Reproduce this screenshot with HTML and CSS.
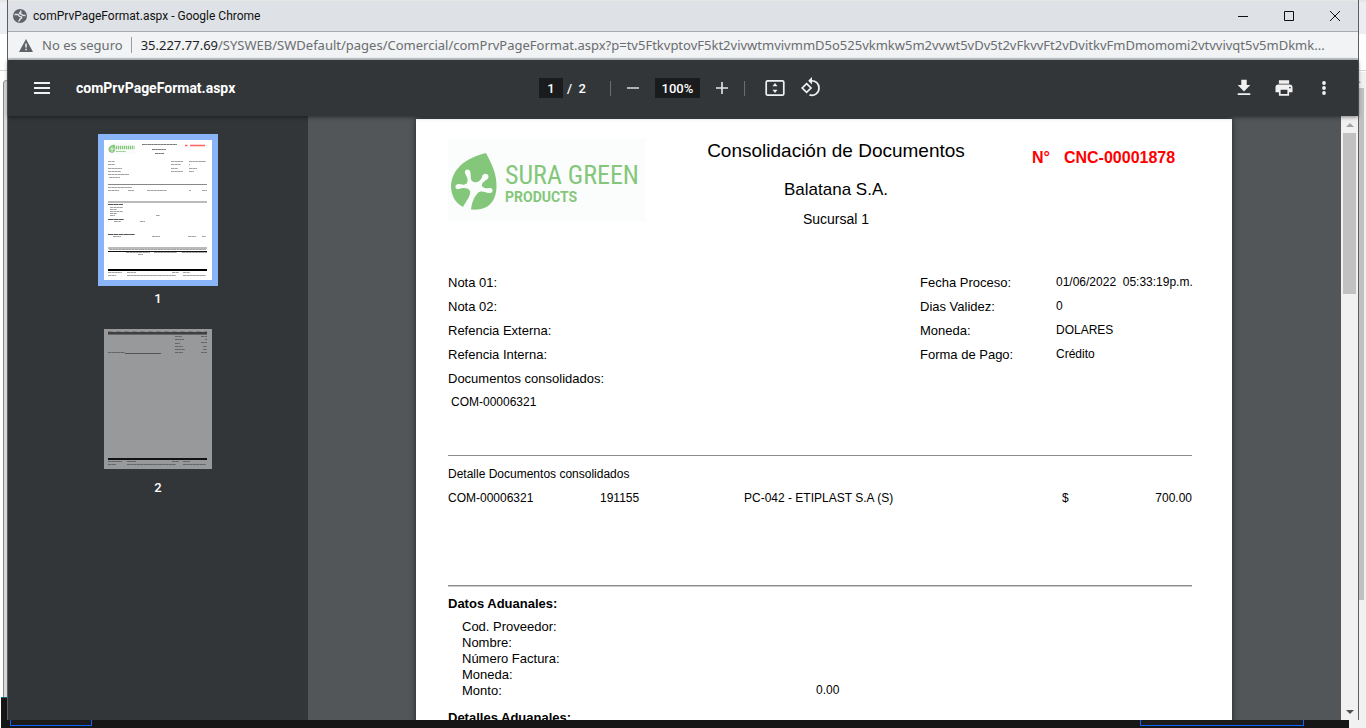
FILE: index.html
```html
<!DOCTYPE html>
<html lang="es">
<head>
<meta charset="utf-8">
<title>comPrvPageFormat.aspx - Google Chrome</title>
<link rel="stylesheet" href="styles.css">
</head>
<body>
<div class="desktop">
  <div class="backdrop" aria-hidden="true">
    <div class="back-tabs"></div>
    <div class="back-panel"></div>
    <div class="back-scroll"><i class="arrow-up"></i><div class="back-thumb"></div></div>
    <div class="back-footer-edge"></div>
    <div class="back-footer"><span class="back-button"></span><span class="back-button back-button-wide"></span></div>
  </div>

  <section class="window">
    <header class="titlebar">
      <svg class="globe" viewBox="0 0 14 14"><circle cx="7" cy="7" r="7" fill="#5f6368"/><path d="M1.500 5.500H4.500C6 5.500 5.500 7.500 7 7.500C9.500 7.500 9 9.500 7.500 9.700C6.500 10 7 11.500 5.500 12.500M12.500 6.500H10.500C9 6.500 9.300 5 7.500 5C6 5 6.300 3.500 7.800 3.200V1.500" fill="none" stroke="#dee1e6" stroke-width="1.400"/></svg>
      <span class="window-title">comPrvPageFormat.aspx - Google Chrome</span>
      <div class="caption-buttons">
        <button aria-label="Minimizar"><svg viewBox="0 0 12 12"><path d="M1 6.5H11"/></svg></button>
        <button aria-label="Maximizar"><svg viewBox="0 0 12 12"><path d="M1.5 1.5H10.5V10.5H1.5Z"/></svg></button>
        <button aria-label="Cerrar"><svg viewBox="0 0 12 12"><path d="M1 1L11 11M11 1L1 11"/></svg></button>
      </div>
    </header>

    <div class="addressbar">
      <svg class="warning" viewBox="0 0 14 13"><path d="M7 0L14 13H0Z" fill="#5f6368"/><path d="M7 4.5V8.5M7 9.7V11.2" stroke="#f1f3f4" stroke-width="1.5"/></svg>
      <span class="insecure">No es seguro</span>
      <span class="url"><b>35.227.77.69</b>/SYSWEB/SWDefault/pages/Comercial/comPrvPageFormat.aspx?p=tv5FtkvptovF5kt2vivwtmvivmmD5o525vkmkw5m2vvwt5vDv5t2vFkvvFt2vDvitkvFmDmomomi2vtvvivqt5v5mDkmk...</span>
    </div>

    <div class="toolbar">
      <div class="tool-left">
        <button aria-label="Menú"><svg viewBox="0 0 24 24"><path d="M4 7H20M4 12H20M4 17H20" stroke="#f1f1f1" stroke-width="2"/></svg></button>
        <h1 class="file-name">comPrvPageFormat.aspx</h1>
      </div>
      <div class="tool-center">
        <input class="page-number" type="text" value="1" aria-label="Número de página">
        <span class="page-total">/&nbsp; 2</span>
        <i class="separator"></i>
        <button aria-label="Alejar"><svg viewBox="0 0 24 24"><path d="M6 12H18" stroke="#d0d1d2" stroke-width="1.6"/></svg></button>
        <input class="zoom-level" type="text" value="100%" aria-label="Nivel de zoom">
        <button aria-label="Acercar"><svg viewBox="0 0 24 24"><path d="M6 12H18M12 6V18" stroke="#e8e8e8" stroke-width="1.6"/></svg></button>
        <i class="separator"></i>
        <button class="fit" aria-label="Ajustar a la página"><svg viewBox="0 0 24 24"><rect x="3.2" y="4.8" width="17.6" height="14.4" rx="1.5" fill="none" stroke="#f1f1f1" stroke-width="1.7"/><path d="M12 7L14.5 10.2H9.5ZM12 17L14.5 13.8H9.5Z" fill="#f1f1f1"/></svg></button>
        <button class="rotate" aria-label="Girar"><svg viewBox="0 0 24 24"><path d="M7.6 7.6L12 12L7.6 16.4L3.2 12Z" fill="none" stroke="#f1f1f1" stroke-width="1.7"/><path d="M11.5 4.8C17 4.3 20 8 20 12C20 17 15.5 20.5 10.5 18.9" fill="none" stroke="#f1f1f1" stroke-width="1.7"/><path d="M13 1V8.4L9.2 4.7Z" fill="#f1f1f1"/></svg></button>
      </div>
      <div class="tool-right">
        <button aria-label="Descargar"><svg viewBox="0 0 24 24"><path d="M19 9H15V3H9V9H5L12 16ZM5 18V20H19V18Z" fill="#f1f1f1" transform="translate(1.2 1) scale(.9)"/></svg></button>
        <button aria-label="Imprimir"><svg viewBox="0 0 24 24"><path fill="#f1f1f1" d="M19 8H5C3.3 8 2 9.3 2 11V17H6V21H18V17H22V11C22 9.3 20.7 8 19 8ZM16 19H8V14H16ZM19 12.5A1 1 0 1 1 19 10.5A1 1 0 1 1 19 12.5ZM18 3H6V7H18Z" transform="translate(1.8 1.8) scale(.85)"/></svg></button>
        <button aria-label="Más acciones"><svg viewBox="0 0 24 24"><g fill="#f1f1f1"><circle cx="12" cy="7" r="1.9"/><circle cx="12" cy="12" r="1.9"/><circle cx="12" cy="17" r="1.9"/></g></svg></button>
      </div>
    </div>

    <div class="viewer">
      <nav class="thumbnails">
        <button class="thumb selected" aria-label="Página 1">
          <svg viewBox="0 0 108 140">
            <rect width="108" height="140" fill="#fff"/>
            <rect x="4" y="3" width="27" height="11" fill="#fafcfb"/>
            <path d="M4.5 9C5 6 8 5 10.500 4.500C12 8 12 12 8 13C5 12 4.500 11 4.500 9Z" fill="#84c77a"/>
            <path d="M6 9H11M8 6.500V12" stroke="#fff" stroke-width=".7"/>
            <path d="M12 7.500H30.500" stroke="#84c77a" stroke-width="3.500" stroke-dasharray="1.300 .7"/>
            <path d="M12 11.500H22" stroke="#84c77a" stroke-width="1.200" stroke-dasharray="1 .4"/>
            <path d="M81 5.500H83.500M86 5.500H101" stroke="#ff6060" stroke-width="1.500"/>
            <g stroke="#777" stroke-width="1.200" stroke-dasharray="3.300 .3 2.100 .4">
              <path d="M38 4.500H73M48 9.500H62M51 13.500H60"/>
            </g>
            <g stroke="#8c8c8c" stroke-width=".8" stroke-dasharray="3.300 .3 2.600 .2">
              <path d="M4 21.500H11M4 24.500H11M4 28.500H18M4 31.500H17M4 34.500H25M5 37.500H16"/>
              <path d="M67 21.500H79M67 24.500H77M67 28.500H74M67 31.500H79M85 21.500H102M85 24.500H86M85 28.500H93M85 31.500H90"/>
              <path d="M4 47.500H28M4 50.500H15M24 50.500H30M43 50.500H63M85 50.500H87M98 50.500H103"/>
              <path d="M6 67.500H19M6 69.500H13M6 71.500H19M6 73.500H13M6 75.500H11M52 75.500H56M10 81.500H17M36 81.500H41"/>
              <path d="M9 96.500H17M48 96.500H56M84 96.500H92M98 96.500H102M5 109.500H102M22 112.500H46M50 112.500H73M78 112.500H103M34 114.500H39"/>
              <path d="M4 132.500H18M23 132.500H32M68 132.500H75M79 132.500H86M4 135.500H12M23 135.500H72M79 135.500H102"/>
            </g>
            <path d="M4 64.500H19M4 79.500H20M4 94.500H31" stroke="#555" stroke-width="1" stroke-dasharray="5 .3"/>
            <path d="M4 44.500H103" stroke="#888"/>
            <path d="M4 62H103M4 108H103" stroke="#bbb" stroke-width="2"/>
            <path d="M4 111.500H103" stroke="#111"/>
            <path d="M4 130H103" stroke="#000" stroke-width="2"/>
          </svg>
        </button>
        <span class="thumb-label">1</span>
        <button class="thumb" aria-label="Página 2">
          <svg viewBox="0 0 108 140">
            <rect width="108" height="140" fill="#98999b"/>
            <path d="M4 2.500H103" stroke="#7a7b7d" stroke-dasharray="5 3"/>
            <path d="M4 4H103" stroke="#222" stroke-width="1.400"/>
            <path d="M4 5.500H103" stroke="#666"/>
            <g stroke="#56575a" stroke-width=".8" stroke-dasharray="3.300 .3 2.600 .2">
              <path d="M71 7.500H78M71 10.500H80M71 14.500H76M71 17.500H79M71 20.500H81M71 23.500H79M97 7.500H103M101 10.500H103M97 13.500H103M99 17.500H103M99 20.500H103M97 23.500H103M4 23.500H21"/>
              <path d="M4 132.500H18M23 132.500H32M68 132.500H75M79 132.500H86M4 135.500H12M23 135.500H72M79 135.500H102"/>
            </g>
            <path d="M21 24.500H57" stroke="#555"/>
            <path d="M4 130H103" stroke="#111315" stroke-width="2"/>
          </svg>
        </button>
        <span class="thumb-label">2</span>
      </nav>

      <main class="document">
        <article class="sheet">
          <header class="sheet-header">
            <svg class="logo" viewBox="0 0 198 84" role="img" aria-label="Sura Green Products">
              <rect width="198" height="84" fill="#fbfdfc"/>
              <path d="M38 15C43 25 49 35 48.500 49C48 64 40 73 23 71.500C24 65 25 61 29 56C32 52 36 54 40 55C46 56 46 49 41 50C37 51 33 49 34 46C36 42 41 42 40.500 38C39 34 34 36 34 39C33 43 29 45 26 44C22 43 23 39 22.500 35C22 30 16 31 17 35C18 38 21 41 19 45C17 48 13 46 10 46C6 47 7 52 11 51C15 49 21 50 22 53C23 58 18 63 15 69C7 65 3 57 3 48C4 31 17 20 38 15Z" fill="#84c77a"/>
              <text class="logo-name" x="57" y="46">SURA GREEN</text>
              <text class="logo-sub" x="57" y="64">PRODUCTS</text>
            </svg>
            <div class="sheet-titles">
              <h2>Consolidación de Documentos</h2>
              <p class="company">Balatana S.A.</p>
              <p class="branch">Sucursal 1</p>
            </div>
            <p class="doc-number"><span>N°</span><span>CNC-00001878</span></p>
          </header>

          <div class="meta">
            <div class="meta-notes">
              <p>Nota 01:</p>
              <p>Nota 02:</p>
              <p>Refencia Externa:</p>
              <p>Refencia Interna:</p>
              <p>Documentos consolidados:</p>
              <p class="consolidated">COM-00006321</p>
            </div>
            <dl class="meta-values">
              <dt>Fecha Proceso:</dt><dd>01/06/2022&nbsp; 05:33:19p.m.</dd>
              <dt>Dias Validez:</dt><dd>0</dd>
              <dt>Moneda:</dt><dd>DOLARES</dd>
              <dt>Forma de Pago:</dt><dd>Crédito</dd>
            </dl>
          </div>

          <section class="detail">
            <table>
              <caption>Detalle Documentos consolidados</caption>
              <tbody><tr><td class="c-doc">COM-00006321</td><td class="c-ref">191155</td><td class="c-name">PC-042 - ETIPLAST S.A (S)</td><td class="c-cur">$</td><td class="c-amount">700.00</td></tr></tbody>
            </table>
          </section>

          <section class="customs">
            <h3>Datos Aduanales:</h3>
            <dl>
              <dt>Cod. Proveedor:</dt><dd></dd>
              <dt>Nombre:</dt><dd></dd>
              <dt>Número Factura:</dt><dd></dd>
              <dt>Moneda:</dt><dd></dd>
              <dt>Monto:</dt><dd>0.00</dd>
            </dl>
            <h3>Detalles Aduanales:</h3>
          </section>
        </article>
      </main>

      <div class="scrollbar" aria-hidden="true"><i class="arrow-up"></i><div class="scroll-thumb"></div><i class="arrow-down"></i></div>
    </div>
  </section>
</div>
</body>
</html>
```
FILE: styles.css
```css
* { box-sizing: border-box; }
body, h1, h2, h3, p, dl, dd { margin: 0; }
body { font-family: "Liberation Sans", Arial, sans-serif; background: #fff; overflow: hidden; }
button { border: 0; padding: 0; background: none; display: flex; align-items: center; justify-content: center; }
svg { display: block; }

.desktop { position: relative; height: 100vh; padding: 0 7px 8px; }

/* Page that stays visible around the edges of the window */
.backdrop { position: absolute; inset: 0; border-top: 2px solid #e6e6e6; }
.back-tabs { height: 69px; border-bottom: 1px solid #d5d5d5; background: linear-gradient(#eceef3 32px, #fff 32px); }
.back-panel { position: absolute; left: 3px; top: 78px; bottom: 30px; width: 10px; border-left: 1px solid #888; border-top: 1px solid #999; border-radius: 4px 0 0 0; background: #d8d8d8; }
.back-scroll { position: absolute; right: 0; top: 70px; bottom: 0; width: 17px; padding-right: 2px; background: #f1f1f1; }
.back-scroll .arrow-up { margin: 7px auto 5px; }
.back-thumb { height: 78%; background: #c1c1c1; }
.back-footer-edge { position: absolute; left: 1px; bottom: 0; width: 20px; height: 31px; background: #161616; border-top: 1px solid #0a6a85; }
.back-footer { position: absolute; left: 1px; right: 17px; bottom: 0; height: 10px; padding: 0 45px 2px 9px; display: flex; justify-content: space-between; background: #161616; }
.back-button { width: 82px; border: 1px solid #0f62fe; background: #1c1c1c; }
.back-button-wide { width: 164px; }

.window { position: relative; height: 100%; display: flex; flex-direction: column; border: solid #5b5d60; border-width: 0 1px; background: #323639; }

.titlebar { flex: none; height: 32px; display: flex; align-items: center; padding-left: 5px; background: #dee1e6; border-top: 1px solid #e6e6e6; border-bottom: 1px solid #a9abae; }
.globe { width: 14px; height: 14px; margin-right: 6px; }
.window-title { font: 12px/16px Roboto, "Noto Sans", sans-serif; color: #111; }
.caption-buttons { margin-left: auto; display: flex; }
.caption-buttons button { width: 46px; height: 30px; }
.caption-buttons svg { width: 12px; height: 12px; fill: none; stroke: #111; }

.addressbar { flex: none; height: 28px; display: flex; align-items: center; padding: 0 16px 0 11px; background: #f1f3f4; border-bottom: 2px solid #c4c6c8; font: 13px/20px "Noto Sans", "Open Sans", sans-serif; color: #6a6d71; white-space: nowrap; }
.warning { width: 14px; height: 13px; margin-right: 9px; }
.insecure { padding-right: 8px; margin-right: 9px; border-right: 1px solid #9a9da0; line-height: 16px; }
.url { overflow: hidden; }
.url b { font-weight: 400; color: #202124; }

.toolbar { position: relative; z-index: 1; flex: none; height: 56px; display: grid; grid-template-columns: 1fr auto 1fr; align-items: center; padding: 0 22px; background: #323639; color: #fff; font-family: Roboto, sans-serif; font-size: 13px; box-shadow: 0 1px 4px rgba(0, 0, 0, .5); }
.toolbar svg { width: 24px; height: 24px; }
.tool-left, .tool-center, .tool-right { display: flex; align-items: center; }
.tool-left { gap: 22px; }
.file-name { font-size: 14px; font-weight: 700; line-height: 16px; }
.tool-center { padding-right: 4px; }
.tool-right { justify-content: flex-end; gap: 16px; }
.toolbar input { height: 20px; border: 0; padding: 0; background: #191b1c; color: #fff; text-align: center; font: 500 13px/16px Roboto, sans-serif; }
.page-number { width: 24px; }
.zoom-level { width: 45px; margin: 0 10px; }
.page-total { margin-left: 4px; font-weight: 500; white-space: pre; }
.separator { width: 1px; height: 15px; margin: 0 10px 0 24px; background: #6b6e70; }
.zoom-level ~ .separator { margin: 0 18px 0 10px; }
.rotate { margin-left: 12px; }

.viewer { flex: 1; min-height: 0; display: flex; }
.thumbnails { flex: none; width: 300px; padding-top: 18px; display: flex; flex-direction: column; align-items: center; background: #323639; color: #fff; font: 500 13px/16px Roboto, sans-serif; }
.thumb { width: 120px; padding: 6px; }
.thumb svg { width: 108px; height: 140px; }
.selected { background: #8ab4f8; }
.thumb-label { margin: 5px 0 16px; }

.document { flex: 1; min-width: 0; overflow: hidden; padding: 3px 1px 0 0; background: #525659; }
.sheet { width: 816px; min-height: 1056px; margin: 0 auto; padding: 19px 40px 0 32px; background: #fff; color: #000; font-size: 13px; box-shadow: 0 0 6px rgba(0, 0, 0, .6); }

.sheet-header { display: grid; grid-template-columns: 198px 380px 1fr; height: 133px; }
.logo { width: 198px; height: 84px; }
.logo text { fill: #84c77a; }
.logo-name { font: 26px "Roboto Condensed", "Liberation Sans Narrow", "Liberation Sans", sans-serif; }
.logo-sub { font: 700 14px Roboto, sans-serif; }
.sheet-titles { padding-top: 1px; text-align: center; }
.sheet-titles h2 { font-size: 19px; font-weight: 400; line-height: 24px; }
.company { margin-top: 15px; font-size: 17px; line-height: 24px; }
.branch { margin-top: 7px; font-size: 14px; line-height: 20px; }
.doc-number { display: flex; gap: 14px; padding: 10px 0 0 6px; color: #f00; font-size: 16px; font-weight: 700; line-height: 20px; white-space: nowrap; }

.meta { display: flex; justify-content: space-between; height: 184px; line-height: 24px; }
.consolidated { padding-left: 3px; font-size: 12px; line-height: 22px; }
.meta-values { display: grid; grid-template-columns: 136px 136px; grid-auto-rows: 24px; }
.meta-values dd { font-size: 12px; line-height: 22px; white-space: nowrap; }

.detail { height: 130px; padding-top: 6px; border-top: 1px solid #8c8c8c; font-size: 12px; line-height: 24px; }
.detail table { width: 100%; border-collapse: collapse; table-layout: fixed; }
.detail caption { text-align: left; }
.detail td { padding: 0; }
.c-doc { width: 152px; }
.c-ref { width: 144px; }
.c-name { width: 318px; }
.c-cur { width: 40px; }
.c-amount { text-align: right; }

.customs { padding-top: 8px; border-top: 1px solid #8c8c8c; box-shadow: inset 0 1px #ccc; line-height: 20px; }
.customs h3 { font-size: 13px; line-height: 20px; }
.customs dl { display: grid; grid-template-columns: 354px 1fr; grid-auto-rows: 16px; margin: 5px 0 9px 14px; line-height: 16px; }
.customs dd { font-size: 12px; line-height: 14px; }

.scrollbar { flex: none; width: 17px; display: flex; flex-direction: column; background: #f1f1f1; }
.scroll-thumb { height: 161px; margin: 0 2px; background: #c1c1c1; }
.arrow-up, .arrow-down { display: block; width: 0; margin: 7px auto 6px; border: 4px solid transparent; }
.arrow-up { border-top: 0; border-bottom-color: #a3a3a3; }
.arrow-down { margin-top: auto; border-bottom: 0; border-top-color: #505050; }
```
